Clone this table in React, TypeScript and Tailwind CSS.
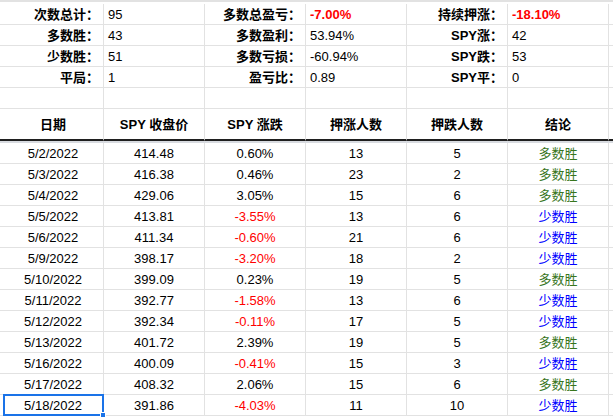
import React from "react";

type Tone = "n" | "red" | "redb" | "green" | "blue" | "b";

const toneCls: Record<Tone, string> = {
  n: "text-black",
  red: "text-[#ff0000]",
  redb: "text-[#ff0000] font-bold",
  green: "text-[#38761d]",
  blue: "text-[#0000ff]",
  b: "text-black font-bold",
};

const summary: [string, string, Tone, string, string, Tone, string, string, Tone][] = [
  ["次数总计：", "95", "n", "多数总盈亏：", "-7.00%", "redb", "持续押涨：", "-18.10%", "redb"],
  ["多数胜：", "43", "n", "多数盈利：", "53.94%", "n", "SPY涨：", "42", "n"],
  ["少数胜：", "51", "n", "多数亏损：", "-60.94%", "n", "SPY跌：", "53", "n"],
  ["平局：", "1", "n", "盈亏比：", "0.89", "n", "SPY平：", "0", "n"],
];

const data: [string, string, string, string, string, boolean][] = [
  ["5/2/2022", "414.48", "0.60%", "13", "5", true],
  ["5/3/2022", "416.38", "0.46%", "23", "2", true],
  ["5/4/2022", "429.06", "3.05%", "15", "6", true],
  ["5/5/2022", "413.81", "-3.55%", "13", "6", false],
  ["5/6/2022", "411.34", "-0.60%", "21", "6", false],
  ["5/9/2022", "398.17", "-3.20%", "18", "2", false],
  ["5/10/2022", "399.09", "0.23%", "19", "5", true],
  ["5/11/2022", "392.77", "-1.58%", "13", "6", false],
  ["5/12/2022", "392.34", "-0.11%", "17", "5", false],
  ["5/13/2022", "401.72", "2.39%", "19", "5", true],
  ["5/16/2022", "400.09", "-0.41%", "15", "3", false],
  ["5/17/2022", "408.32", "2.06%", "15", "6", true],
  ["5/18/2022", "391.86", "-4.03%", "11", "10", false],
];

const gridCls =
  "grid grid-cols-[3px_101px_101px_101px_101px_101px_101px_1fr]";
const line = "border-[#e2e2e2]";

function Edge({ h, extra = "" }: { h: string; extra?: string }) {
  return <div className={`${h} border-b ${line} ${extra}`} />;
}

export default function App() {
  return (
    <div
      className="w-[613px] h-[419px] overflow-hidden bg-white text-[13px] leading-none text-black"
      style={{ fontFamily: '"Liberation Sans", Arial, "Noto Sans CJK SC", sans-serif' }}
    >
      <div className={`h-[4px] border-t-2 ${line}`} />
      {summary.map((r, i) => (
        <div key={i} className={gridCls}>
          <Edge h="h-[21px]" />
          {[0, 1, 2].map((k) => (
            <React.Fragment key={k}>
              <div
                className={`h-[21px] border-b border-r ${line} flex items-center justify-end pr-[4px] font-bold`}
              >
                {r[k * 3]}
              </div>
              <div
                className={`h-[21px] border-b border-r ${line} flex items-center pl-[4px] ${toneCls[r[k * 3 + 2] as Tone]}`}
              >
                {r[k * 3 + 1]}
              </div>
            </React.Fragment>
          ))}
          <Edge h="h-[21px]" />
        </div>
      ))}
      <div className={gridCls}>
        <Edge h="h-[21px]" />
        {[0, 1, 2, 3, 4, 5].map((k) => (
          <div key={k} className={`h-[21px] border-b border-r ${line}`} />
        ))}
        <Edge h="h-[21px]" />
      </div>
      <div className={gridCls}>
        <div className="h-[32px] border-b-2 border-[#1f1f1f]" />
        {["日期", "SPY 收盘价", "SPY 涨跌", "押涨人数", "押跌人数", "结论"].map((t) => (
          <div
            key={t}
            className={`h-[32px] border-r ${line} border-b-2 border-b-[#1f1f1f] flex items-center justify-center font-bold`}
          >
            {t}
          </div>
        ))}
        <div className="h-[32px] border-b-2 border-[#1f1f1f]" />
      </div>
      <div className="h-[2px] bg-[#d8dbe0]" />
      {data.map((r, i) => {
        const last = i === data.length - 1;
        const neg = r[2].startsWith("-");
        return (
          <div key={i} className={gridCls}>
            <Edge h="h-[21px]" />
            <div
              className={`relative h-[21px] border-b border-r ${line} flex items-center justify-center`}
            >
              {r[0]}
              {last && (
                <>
                  <div className="absolute left-0 top-[-1px] right-[-1px] bottom-[-1px] border-2 border-[#1a73e8]" />
                  <div className="absolute right-[-3px] bottom-[-3px] w-[6px] h-[6px] bg-[#1a73e8] border border-white" />
                </>
              )}
            </div>
            <div className={`h-[21px] border-b border-r ${line} flex items-center justify-center`}>
              {r[1]}
            </div>
            <div
              className={`h-[21px] border-b border-r ${line} flex items-center justify-center ${neg ? "text-[#ff0000]" : ""}`}
            >
              {r[2]}
            </div>
            <div className={`h-[21px] border-b border-r ${line} flex items-center justify-center`}>
              {r[3]}
            </div>
            <div className={`h-[21px] border-b border-r ${line} flex items-center justify-center`}>
              {r[4]}
            </div>
            <div
              className={`h-[21px] border-b border-r ${line} flex items-center justify-center ${r[5] ? "text-[#38761d]" : "text-[#0000ff]"}`}
            >
              {r[5] ? "多数胜" : "少数胜"}
            </div>
            <Edge h="h-[21px]" />
          </div>
        );
      })}
    </div>
  );
}
